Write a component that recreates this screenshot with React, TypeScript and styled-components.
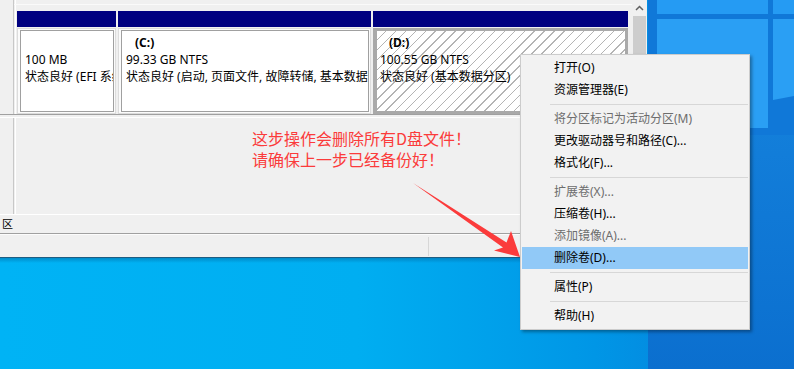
import React from "react";
import styled, { createGlobalStyle, css } from "styled-components";

const Global = createGlobalStyle`
  html, body { margin: 0; padding: 0; }
  body { font-family: "Segoe UI", "Noto Sans", "Noto Sans CJK SC", sans-serif; }
`;

const UI_FONT = `"Segoe UI", "Noto Sans", "Noto Sans CJK SC", sans-serif`;

const Stage = styled.div`
  position: relative;
  width: 794px;
  height: 369px;
  overflow: hidden;
  background: #00aef2;
`;

const Wallpaper = styled.svg`
  position: absolute;
  left: 0;
  top: 0;
  z-index: 0;
`;

const Window = styled.div`
  position: relative;
  z-index: 1;
  width: 647px;
  height: 257px;
  background: #f0f0f0;
  border-bottom: 1px solid #1d5d82;
  display: flex;
  flex-direction: column;
  font-family: ${UI_FONT};
  font-size: 12px;
  color: #000;
`;

const DiskPane = styled.div`
  height: 214px;
  display: flex;
`;

const DiskList = styled.div`
  flex: 1;
  display: flex;
  flex-direction: column;
`;

const DiskRow = styled.div<{ $grow?: boolean }>`
  display: flex;
  ${(p) =>
    p.$grow
      ? css`
          flex: 1;
          border-top: 1px solid #ffffff;
          margin-top: 2px;
        `
      : css`
          height: 114px;
          border-bottom: 1px solid #a0a0a0;
        `}
`;

const LabelCell = styled.div`
  width: 13px;
  border-right: 1px solid #c8c8c8;
  box-shadow: 1px 0 0 #f0f0f0, 2px 0 0 #ffffff;
`;

const Partitions = styled.div`
  flex: 1;
  display: flex;
  gap: 2px;
  padding: 6px 0 0 3px;
  margin-top: 4px;
  border-top: 1px solid #fafafa;
`;

const EmptyArea = styled.div`
  flex: 1;
`;

const PartitionCol = styled.div<{ $w: number }>`
  width: ${(p) => p.$w}px;
  display: flex;
  flex-direction: column;
`;

const NavyBar = styled.div`
  height: 16px;
  background: #000080;
`;

const PartBody = styled.div<{ $selected?: boolean }>`
  height: 82px;
  margin-top: 1px;
  display: flex;
  ${(p) =>
    p.$selected
      ? css`
          border: 3px solid #a9a9a9;
          border-left-width: 4px;
          background: repeating-linear-gradient(
            135deg,
            #ffffff 0px,
            #ffffff 6px,
            #b4b4b4 6px,
            #b4b4b4 7px
          );
        `
      : css`
          background: #fbfbfb;
          border: 1px solid #dcdcdc;
          padding: 1px 1px 1px 2px;
        `}
`;

const PartInner = styled.div<{ $selected?: boolean }>`
  flex: 1;
  overflow: hidden;
  white-space: nowrap;
  line-height: 17px;
  padding: 3px 0 0 ${(p) => (p.$selected ? 3 : 4)}px;
  ${(p) =>
    !p.$selected &&
    css`
      background: #ffffff;
      border: 1px solid #a0a0a0;
    `}
`;

const VolName = styled.div`
  font-weight: bold;
  padding-left: 9px;
  height: 17px;
`;

const Line = styled.div`
  height: 17px;
`;

const Scrollbar = styled.div`
  width: 15px;
  background: #f0f0f0;
  display: flex;
  flex-direction: column;
  align-items: center;
`;

const ScrollArrow = styled.div`
  height: 16px;
  width: 15px;
  display: flex;
  align-items: center;
  justify-content: center;
`;

const ScrollThumb = styled.div`
  width: 13px;
  height: 190px;
  background: #cdcdcd;
`;

const LegendBar = styled.div`
  height: 18px;
  border-top: 1px solid #ffffff;
  border-bottom: 1px solid #a0a0a0;
  display: flex;
  align-items: center;
  padding-left: 2px;
  line-height: 18px;
  font-size: 11px;
`;

const StatusBar = styled.div`
  flex: 1;
  border-top: 1px solid #fcfcfc;
  display: flex;
  padding: 2px 0 1px;
`;

const StatusPane = styled.div<{ $w?: number }>`
  ${(p) => (p.$w ? `width: ${p.$w}px;` : "flex: 1;")}
  & + & {
    border-left: 1px solid #d7d7d7;
  }
`;

const Note = styled.div`
  position: absolute;
  z-index: 2;
  left: 252px;
  top: 128px;
  font-family: "Noto Sans CJK SC", sans-serif;
  font-size: 16px;
  line-height: 21px;
  color: #fb3b3b;
`;

const ArrowSvg = styled.svg`
  position: absolute;
  z-index: 3;
  left: 0;
  top: 0;
  pointer-events: none;
`;

const Menu = styled.div`
  position: absolute;
  z-index: 4;
  left: 520px;
  top: 54px;
  width: 226px;
  padding: 2px 1px;
  background: #f2f2f2;
  border: 1px solid #cccccc;
  box-shadow: 2px 2px 3px rgba(0, 0, 0, 0.35);
  font-family: ${UI_FONT};
  font-size: 12px;
`;

const MenuItem = styled.div<{ $disabled?: boolean; $active?: boolean }>`
  height: 22px;
  line-height: 22px;
  padding-left: 32px;
  color: ${(p) => (p.$disabled ? "#6d6d6d" : "#000000")};
  background: ${(p) => (p.$active ? "#91c9f7" : "transparent")};
  white-space: nowrap;
`;

const MenuSep = styled.div`
  height: 7px;
  margin-left: 28px;
  display: flex;
  align-items: center;
  &::after {
    content: "";
    flex: 1;
    height: 1px;
    background: #d7d7d7;
  }
`;

type Item = { label: string; disabled?: boolean; active?: boolean } | "sep";

const items: Item[] = [
  { label: "打开(O)" },
  { label: "资源管理器(E)" },
  "sep",
  { label: "将分区标记为活动分区(M)", disabled: true },
  { label: "更改驱动器号和路径(C)..." },
  { label: "格式化(F)..." },
  "sep",
  { label: "扩展卷(X)...", disabled: true },
  { label: "压缩卷(H)..." },
  { label: "添加镜像(A)...", disabled: true },
  { label: "删除卷(D)...", active: true },
  "sep",
  { label: "属性(P)" },
  "sep",
  { label: "帮助(H)" },
];

const partitions = [
  { w: 99, name: "", size: "100 MB", status: "状态良好 (EFI 系统分区)" },
  { w: 253, name: "(C:)", size: "99.33 GB NTFS", status: "状态良好 (启动, 页面文件, 故障转储, 基本数据分区)" },
  { w: 255, name: "(D:)", size: "100.55 GB NTFS", status: "状态良好 (基本数据分区)", selected: true },
];

function WallpaperArt() {
  return (
    <Wallpaper width={794} height={369} viewBox="0 0 794 369">
      <defs>
        <linearGradient id="deskH" x1="0" y1="0" x2="1" y2="0">
          <stop offset="0" stopColor="#00b3f5" />
          <stop offset="0.45" stopColor="#00aef1" />
          <stop offset="0.75" stopColor="#0096e6" />
          <stop offset="1" stopColor="#0a78d6" />
        </linearGradient>
        <linearGradient id="topShade" x1="0" y1="0" x2="0" y2="1">
          <stop offset="0" stopColor="#005f96" stopOpacity="0.55" />
          <stop offset="1" stopColor="#005f96" stopOpacity="0" />
        </linearGradient>
        <linearGradient id="rightLow" x1="0" y1="0" x2="0" y2="1">
          <stop offset="0" stopColor="#1787e0" />
          <stop offset="1" stopColor="#0b6fcf" />
        </linearGradient>
      </defs>
      <rect x="0" y="0" width="794" height="369" fill="url(#deskH)" />
      <rect x="648" y="0" width="146" height="369" fill="url(#rightLow)" />
      <rect x="648" y="0" width="146" height="135" fill="#1078d8" />
      <rect x="657" y="0" width="111" height="14" fill="#259bf3" />
      <rect x="773" y="0" width="21" height="14" fill="#259bf3" />
      <polygon points="657,19 768,19 768,128 657,128" fill="#2a9ff4" />
      <polygon points="773,19 794,19 794,96 773,100" fill="#2a9ff4" />
      <rect x="0" y="257" width="648" height="6" fill="url(#topShade)" />
    </Wallpaper>
  );
}

function Arrow() {
  return (
    <ArrowSvg width={794} height={369} viewBox="0 0 794 369">
      <polygon
        points="413,183 506.5,242.5 511,231 520,257 494,250.5 503,247.5"
        fill="#fb3b3b"
      />
    </ArrowSvg>
  );
}

export default function App() {
  return (
    <Stage>
      <Global />
      <WallpaperArt />
      <Window>
        <DiskPane>
          <DiskList>
            <DiskRow>
              <LabelCell />
              <Partitions>
                {partitions.map((p) => (
                  <PartitionCol key={p.size} $w={p.w}>
                    <NavyBar />
                    <PartBody $selected={p.selected}>
                      <PartInner $selected={p.selected}>
                        <VolName>{p.name}</VolName>
                        <Line>{p.size}</Line>
                        <Line>{p.status}</Line>
                      </PartInner>
                    </PartBody>
                  </PartitionCol>
                ))}
              </Partitions>
            </DiskRow>
            <DiskRow $grow>
              <LabelCell />
              <EmptyArea />
            </DiskRow>
          </DiskList>
          <Scrollbar>
            <ScrollArrow>
              <svg width="9" height="6" viewBox="0 0 9 6">
                <path d="M1 5 L4.5 1.5 L8 5" fill="none" stroke="#606060" strokeWidth="1.5" />
              </svg>
            </ScrollArrow>
            <ScrollThumb />
          </Scrollbar>
        </DiskPane>
        <LegendBar>区</LegendBar>
        <StatusBar>
          <StatusPane $w={428} />
          <StatusPane />
        </StatusBar>
      </Window>
      <Note>
        这步操作会删除所有D盘文件！
        <br />
        请确保上一步已经备份好！
      </Note>
      <Arrow />
      <Menu>
        {items.map((it, i) =>
          it === "sep" ? (
            <MenuSep key={i} />
          ) : (
            <MenuItem key={i} $disabled={it.disabled} $active={it.active}>
              {it.label}
            </MenuItem>
          )
        )}
      </Menu>
    </Stage>
  );
}
